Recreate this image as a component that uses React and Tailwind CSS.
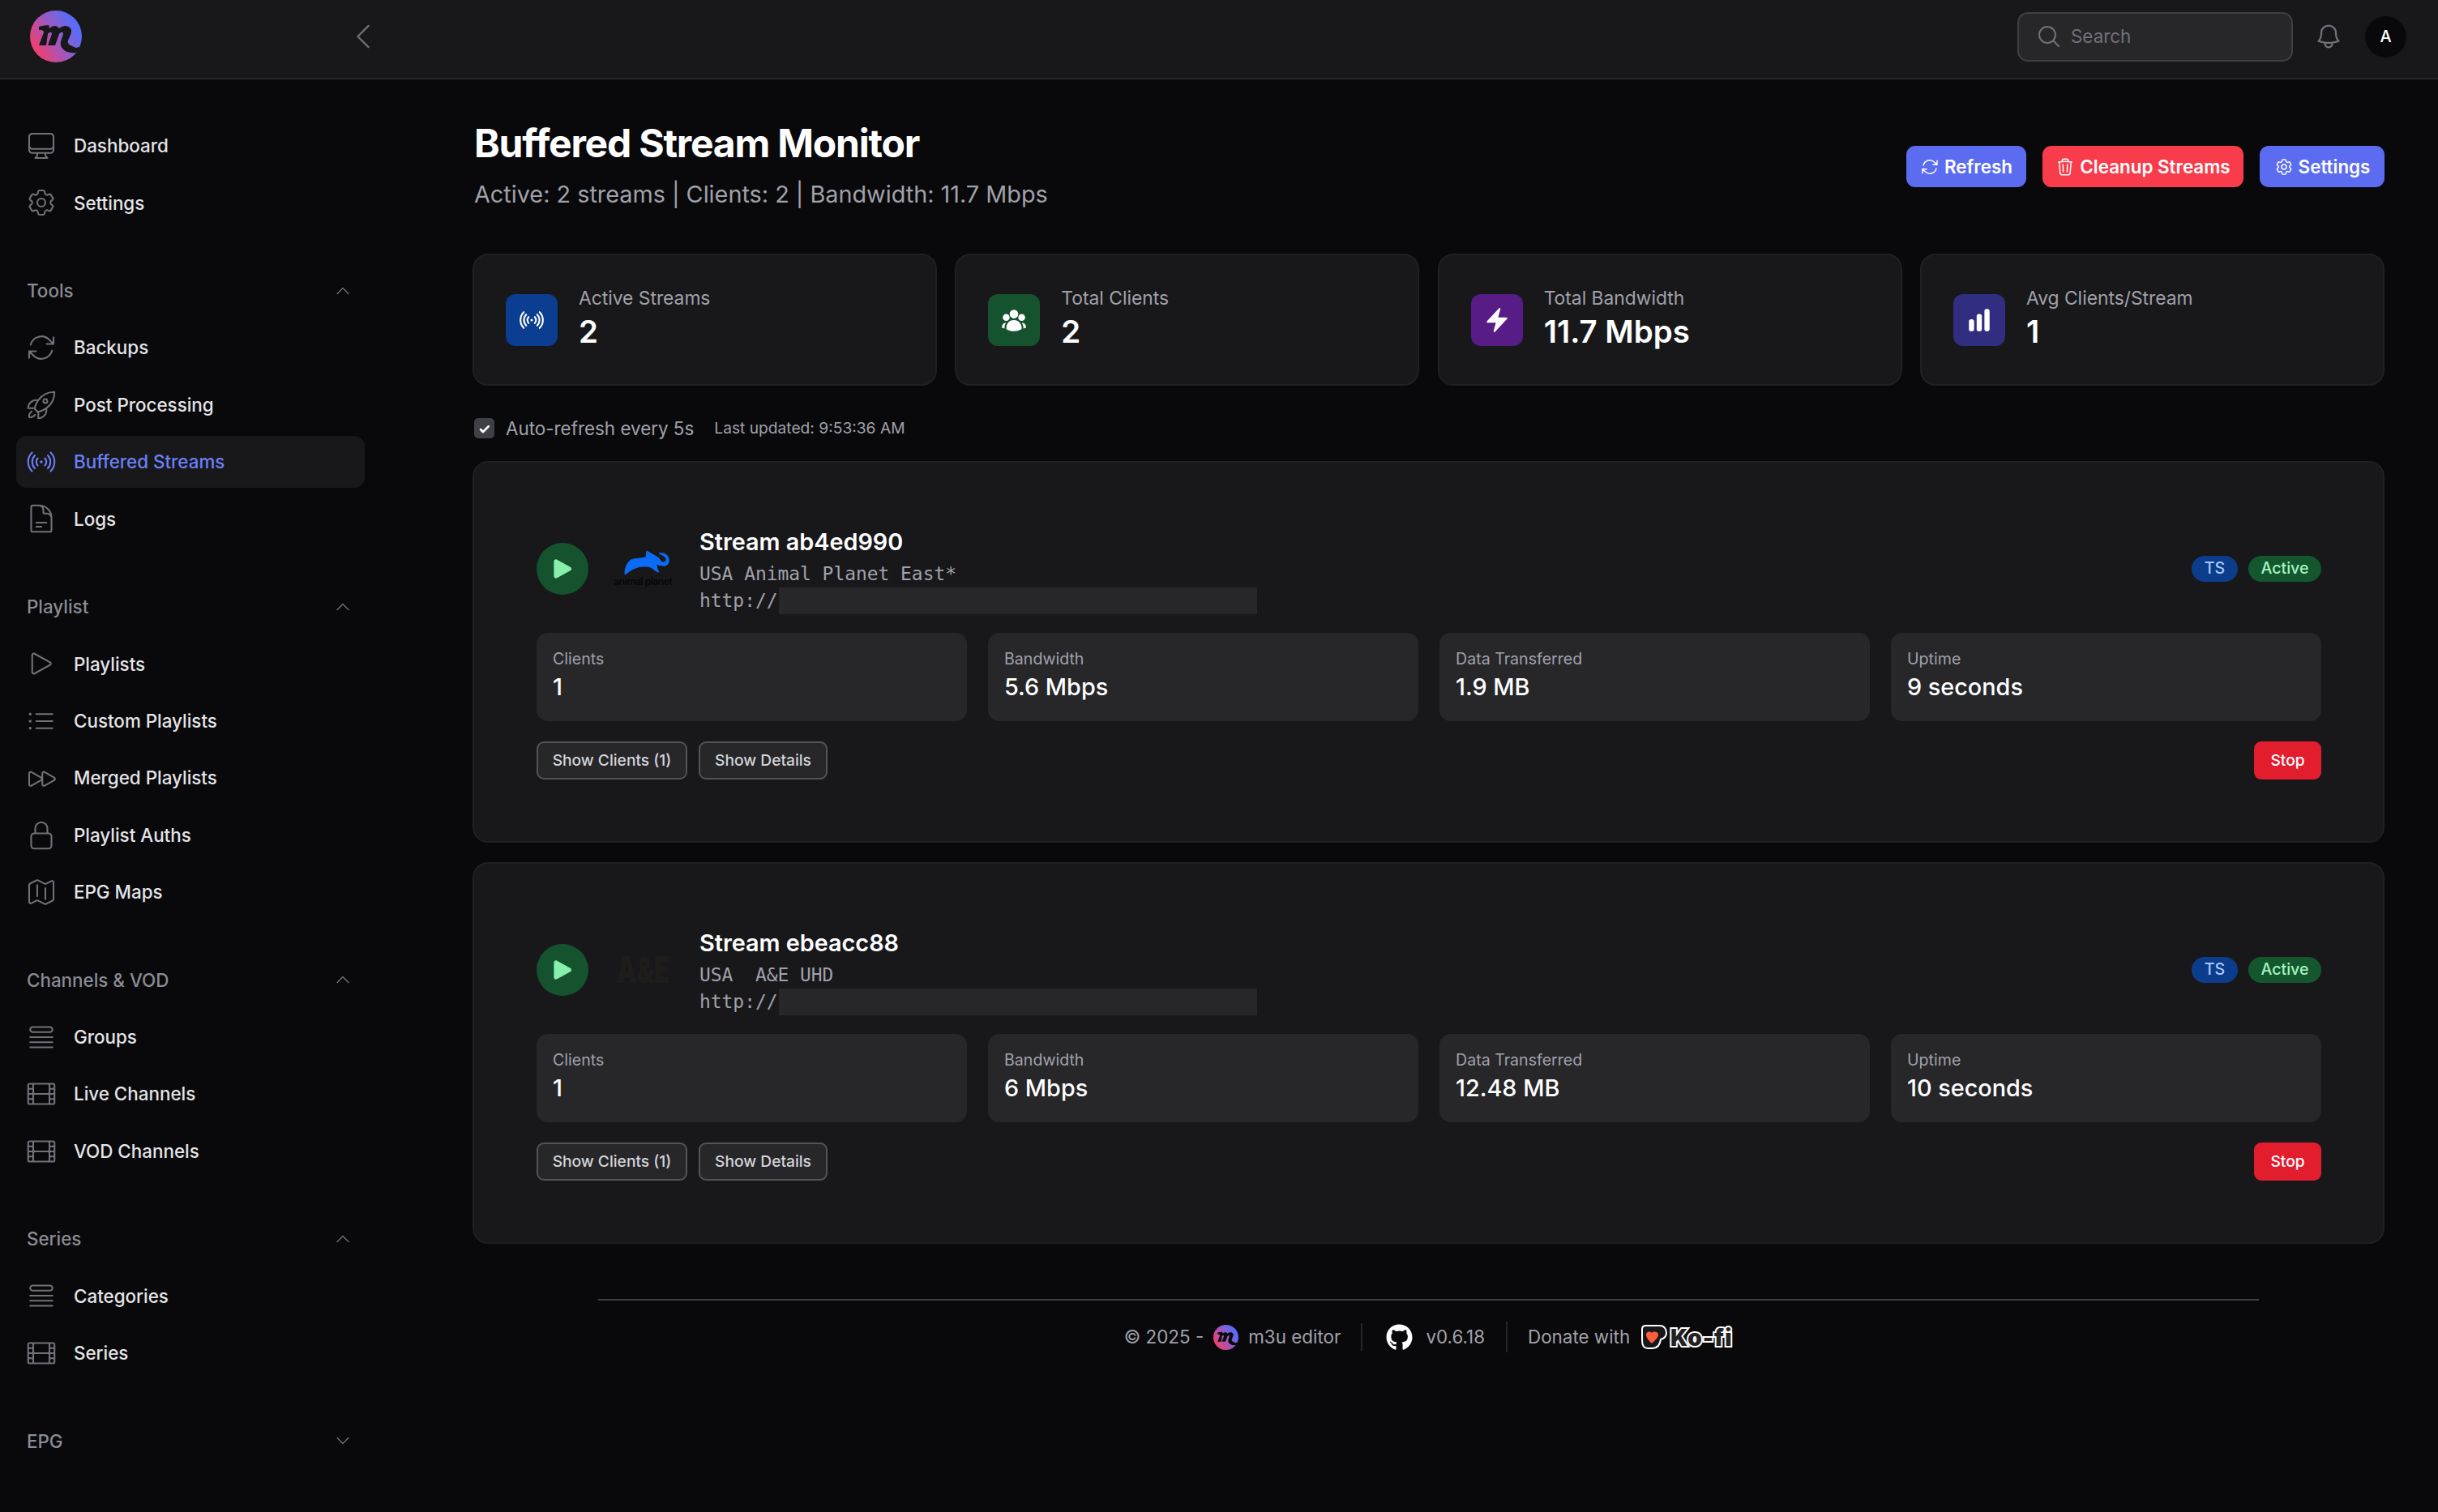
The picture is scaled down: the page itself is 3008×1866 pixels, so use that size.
import {
  HiOutlineComputerDesktop, HiOutlineCog6Tooth, HiOutlineArrowPath, HiOutlineRocketLaunch, HiOutlineSignal,
  HiOutlineDocumentText, HiOutlinePlay, HiOutlineListBullet, HiOutlineForward, HiOutlineLockClosed, HiOutlineMap,
  HiOutlineQueueList, HiOutlineFilm, HiOutlineChevronUp, HiOutlineChevronDown, HiOutlineChevronLeft,
  HiOutlineMagnifyingGlass, HiOutlineBell, HiOutlineTrash, HiUserGroup, HiBolt, HiChartBar, HiPlay,
} from 'react-icons/hi2';
import { FaGithub } from 'react-icons/fa';

const font = 'font-["Inter",sans-serif]';

const nav = [
  { items: [['Dashboard', HiOutlineComputerDesktop], ['Settings', HiOutlineCog6Tooth]] },
  { label: 'Tools', items: [['Backups', HiOutlineArrowPath], ['Post Processing', HiOutlineRocketLaunch], ['Buffered Streams', HiOutlineSignal, true], ['Logs', HiOutlineDocumentText]] },
  { label: 'Playlist', items: [['Playlists', HiOutlinePlay], ['Custom Playlists', HiOutlineListBullet], ['Merged Playlists', HiOutlineForward], ['Playlist Auths', HiOutlineLockClosed], ['EPG Maps', HiOutlineMap]] },
  { label: 'Channels & VOD', items: [['Groups', HiOutlineQueueList], ['Live Channels', HiOutlineFilm], ['VOD Channels', HiOutlineFilm]] },
  { label: 'Series', items: [['Categories', HiOutlineQueueList], ['Series', HiOutlineFilm]] },
  { label: 'EPG', collapsed: true, items: [] },
];

function Logo({ id, className, ink = '#18181b' }) {
  return (
    <svg viewBox="0 0 64 64" className={className}>
      <defs>
        <linearGradient id={id} x1="0.05" y1="0.8" x2="0.85" y2="0.3">
          <stop offset="0" stopColor="#f93c63" />
          <stop offset="0.5" stopColor="#a855b8" />
          <stop offset="1" stopColor="#5a6cf5" />
        </linearGradient>
      </defs>
      <circle cx="32" cy="32" r="32" fill={`url(#${id})`} />
      <path d="M11 20C14 19 18 18 23 18L24 22C28 18 33 18 36 22C41 18 47 18 50 22C53 26 49 32 47 37C46 40 48 42 50 43C52 44 54 45 57 46L64 44L64 50L56 52C48 53 40 50 38 43C37 38 40 33 41 29C41 26 38 26 36 29L31 43L22 43L27 29C27 26 24 26 22 29L20 43L11 43L17 27C17 24 14 24 11 24Z" fill={ink} />
    </svg>
  );
}

function KoFi() {
  return (
    <svg viewBox="0 0 116 32" className="w-[116px] h-[32px] overflow-visible">
      <path d="M3 6C3 3 5 2 8 2L25 2C30 2 33 6 33 11C33 16 30 18 26 19C25 26 22 30 16 30L10 30C5 30 3 26 3 20Z" fill="#18181b" stroke="#fff" strokeWidth="2" />
      <path d="M15 24C11 20 8 17 8 13C8 10 12 8 15 11C18 8 23 10 23 13C23 17 19 20 15 24Z" fill="#ff5e3a" />
      <text x="38" y="27" fontFamily="Inter, sans-serif" fontWeight="900" fontSize="28" fill="#222" stroke="#fff" strokeWidth="4" paintOrder="stroke" letterSpacing="1">Ko-fi</text>
    </svg>
  );
}

function Elephant() {
  return (
    <svg viewBox="0 0 76 46" className="w-[76px] h-[46px]">
      <path d="M15 30C15 24 16 20 18 17C20 13 23 11 26 11C31 10 36 10 41 9L42 1C47 4 53 7 57 10C59 13 60 15 62 15C65 15 66 13 66 11C65 8 62 6 57 4C63 3 68 5 69 11C70 17 66 20 62 19C59 19 56 18 54 17C54 21 55 24 57 27C55 27 54 26 52 25C49 22 46 20 42 20C37 20 33 20 31 21C27 22 24 24 22 25C19 27 17 29 15 30Z" fill="#0a6cf5" stroke="#0a6cf5" strokeWidth="1" />
      <text x="1" y="43" textLength="73" fontFamily="Inter, sans-serif" fontWeight="600" fontSize="12.5" fill="#060608">animal planet</text>
    </svg>
  );
}

function AeLogo() {
  return (
    <svg viewBox="0 0 76 64" className="w-[76px] h-[64px] overflow-visible">
      <text transform="translate(5 48) scale(0.67 1)" fontFamily="Inter, sans-serif" fontWeight="900" fontSize="46" fill="#1f1c1c">A&amp;E</text>
    </svg>
  );
}

function StatCard({ icon: Icon, bg, label, value }) {
  return (
    <div className="flex items-center gap-[26px] h-[163px] px-[39px] rounded-[19px] bg-[#18181b] border-2 border-[#202023]">
      <div className={`w-[64px] h-[64px] rounded-[12px] flex items-center justify-center ${bg}`}>
        <Icon className="w-[34px] h-[34px] text-white" />
      </div>
      <div className="flex flex-col -mt-[3px]">
        <span className="text-[22.8px] leading-[32px] text-[#a1a1aa]">{label}</span>
        <span className="text-[38.4px] leading-[50px] font-semibold text-white">{value}</span>
      </div>
    </div>
  );
}

function Tile({ label, value }) {
  return (
    <div className="h-[109px] rounded-[14px] bg-[#27272a] px-[20px] pt-[20px]">
      <div className="text-[19.6px] leading-[24px] text-[#a1a1aa]">{label}</div>
      <div className="mt-[2px] text-[28.8px] leading-[42px] font-medium text-white">{value}</div>
    </div>
  );
}

function StreamCard({ id, name, logo, stats }) {
  return (
    <div className="h-[471px] rounded-[19px] bg-[#18181b] border-2 border-[#202023] pl-[77px] pr-[76px] pt-[72px]">
      <div className="flex items-center h-[118px]">
        <div className="w-[64px] h-[64px] rounded-full bg-[#14532d] flex items-center justify-center">
          <HiPlay className="w-[34px] h-[34px] text-[#86efac]" />
        </div>
        <div className="w-[76px] h-[64px] ml-[30px] flex items-center justify-center">{logo}</div>
        <div className="ml-[31px] flex flex-col">
          <div className="text-[28.8px] leading-[46px] font-semibold text-white">Stream {id}</div>
          <div className='font-["DejaVu_Sans_Mono",monospace] text-[22.9px] leading-[33px] text-[#a1a1aa] whitespace-pre'>{name}</div>
          <div className='font-["DejaVu_Sans_Mono",monospace] text-[22.9px] leading-[33px] text-[#a1a1aa] flex'>
            http://<span className="ml-[2px] w-[590px] h-[33px] bg-[#27272a]" />
          </div>
        </div>
        <div className="ml-auto flex gap-[13px]">
          <span className="h-[32px] w-[57px] rounded-full bg-[#0c3d8c] text-[#a9c8f7] text-[19.6px] font-medium flex items-center justify-center">TS</span>
          <span className="h-[32px] w-[90px] rounded-full bg-[#14572f] text-[#a7f3c0] text-[19.6px] font-medium flex items-center justify-center">Active</span>
        </div>
      </div>
      <div className="grid grid-cols-4 gap-[26px] mt-[20px]">
        {stats.map(([l, v]) => <Tile key={l} label={l} value={v} />)}
      </div>
      <div className="flex items-center gap-[14px] mt-[25px]">
        <button className="h-[47px] w-[186px] rounded-[9px] bg-[#27272a] border-2 border-[#52525b] text-[19.2px] font-medium text-[#d4d4d8]">Show Clients (1)</button>
        <button className="h-[47px] w-[159px] rounded-[9px] bg-[#27272a] border-2 border-[#52525b] text-[19.2px] font-medium text-[#d4d4d8]">Show Details</button>
        <button className="ml-auto h-[47px] w-[83px] rounded-[9px] bg-[#e11d2e] text-[19.2px] font-medium text-white">Stop</button>
      </div>
    </div>
  );
}

function Sidebar() {
  return (
    <aside className="w-[470px] shrink-0 pt-[50px] pl-[20px] pr-[20px] flex flex-col gap-[44.5px]">
      {nav.map((group, i) => (
        <div key={i}>
          {group.label && (
            <div className="h-[64px] mb-[6.4px] pl-[13px] pr-[16px] flex items-center justify-between text-[22.4px] font-medium text-[#8b8b94]">
              {group.label}
              {group.collapsed
                ? <HiOutlineChevronDown className="w-[22px] h-[22px] text-[#71717a]" />
                : <HiOutlineChevronUp className="w-[22px] h-[22px] text-[#71717a]" />}
            </div>
          )}
          <div className="flex flex-col gap-[6.4px]">
            {group.items.map(([label, Icon, active]) => (
              <div key={label} className={`h-[64px] pl-[11px] rounded-[13px] flex items-center gap-[20px] ${active ? 'bg-[#18181b]' : ''}`}>
                <Icon className={`w-[40px] h-[40px] shrink-0 ${active ? 'text-[#6b80f5]' : 'text-[#71717a]'}`} strokeWidth={1.25} />
                <span className={`text-[22.4px] font-medium ${active ? 'text-[#6b80f5]' : 'text-[#e4e4e7]'}`}>{label}</span>
              </div>
            ))}
          </div>
        </div>
      ))}
    </aside>
  );
}

export default function App() {
  return (
    <div className={`${font} w-[3008px] h-[1866px] overflow-hidden bg-[#09090b] flex flex-col`}>
      <header className="h-[98px] shrink-0 bg-[#18181b] border-b-2 border-[#27272a] flex items-center pl-[37px] pr-[39px] pb-[6px]">
        <Logo id="logo-top" className="w-[64px] h-[64px]" />
        <HiOutlineChevronLeft className="ml-[326px] w-[42px] h-[42px] text-[#71717a]" strokeWidth={1.25} />
        <div className="ml-auto w-[340px] h-[61px] rounded-[13px] bg-[#27272a] border-2 border-[#3f3f46] flex items-center pl-[21px] gap-[11px]">
          <HiOutlineMagnifyingGlass className="w-[32px] h-[32px] text-[#71717a]" />
          <span className="text-[22.4px] text-[#71717a]">Search</span>
        </div>
        <HiOutlineBell className="ml-[26px] w-[36px] h-[36px] text-[#71717a]" />
        <div className="ml-[27px] w-[51px] h-[51px] rounded-full bg-[#09090b] text-white text-[20px] font-medium flex items-center justify-center">A</div>
      </header>
      <div className="flex flex-1 min-h-0">
        <Sidebar />
        <main className="flex-1 pl-[113px] pr-[66px]">
          <div className="flex items-start justify-between h-[215px]">
            <div className="pt-[47px] pl-[2px]">
              <h1 className="text-[48px] leading-[64px] font-bold tracking-tight text-white">Buffered Stream Monitor</h1>
              <p className="mt-[11px] text-[28.8px] leading-[40px] text-[#a1a1aa]">Active: 2 streams | Clients: 2 | Bandwidth: 11.7 Mbps</p>
            </div>
            <div className="flex gap-[20px] pt-[82px]">
              <button className="h-[51px] w-[148px] rounded-[11px] bg-[#5b6cf0] text-white text-[22.4px] font-semibold flex items-center justify-center gap-[6px]"><HiOutlineArrowPath className="w-[24px] h-[24px]" />Refresh</button>
              <button className="h-[51px] w-[248px] rounded-[11px] bg-[#f93c4b] text-white text-[22.4px] font-semibold flex items-center justify-center gap-[6px]"><HiOutlineTrash className="w-[24px] h-[24px]" />Cleanup Streams</button>
              <button className="h-[51px] w-[154px] rounded-[11px] bg-[#5b6cf0] text-white text-[22.4px] font-semibold flex items-center justify-center gap-[6px]"><HiOutlineCog6Tooth className="w-[24px] h-[24px]" />Settings</button>
            </div>
          </div>
          <div className="grid grid-cols-4 gap-[22.4px]">
            <StatCard icon={HiOutlineSignal} bg="bg-[#0b3d91]" label="Active Streams" value="2" />
            <StatCard icon={HiUserGroup} bg="bg-[#14532d]" label="Total Clients" value="2" />
            <StatCard icon={HiBolt} bg="bg-[#581c87]" label="Total Bandwidth" value="11.7 Mbps" />
            <StatCard icon={HiChartBar} bg="bg-[#312e81]" label="Avg Clients/Stream" value="1" />
          </div>
          <div className="flex items-center h-[93px] pt-[12px] pl-[2px]">
            <span className="w-[25px] h-[25px] rounded-[5px] bg-[#3f3f46] flex items-center justify-center">
              <svg viewBox="0 0 16 16" className="w-[22px] h-[22px] text-white" fill="currentColor"><path d="M12.2 5.2a1 1 0 0 1 0 1.4l-5 5a1 1 0 0 1-1.4 0l-2-2a1 1 0 1 1 1.4-1.4l1.3 1.3 4.3-4.3a1 1 0 0 1 1.4 0Z" /></svg>
            </span>
            <span className="ml-[14px] text-[22.4px] text-[#a1a1aa]">Auto-refresh every 5s</span>
            <span className="ml-[25px] text-[19.2px] text-[#a1a1aa]">Last updated: 9:53:36 AM</span>
          </div>
          <div className="flex flex-col gap-[24px]">
            <StreamCard id="ab4ed990" name="USA Animal Planet East*" logo={<Elephant />} stats={[['Clients', '1'], ['Bandwidth', '5.6 Mbps'], ['Data Transferred', '1.9 MB'], ['Uptime', '9 seconds']]} />
            <StreamCard id="ebeacc88" name="USA  A&E UHD" logo={<AeLogo />} stats={[['Clients', '1'], ['Bandwidth', '6 Mbps'], ['Data Transferred', '12.48 MB'], ['Uptime', '10 seconds']]} />
          </div>
          <footer className="mt-[68px] mx-[155px] border-t-2 border-[#3f3f46] pt-[26px] pl-[1px] flex items-center justify-center text-[22.4px] text-[#a1a1aa]">
            <span>© 2025 -</span>
            <Logo id="logo-foot" className="ml-[12px] w-[31px] h-[31px]" ink="#09090b" />
            <span className="ml-[12px]">m3u editor</span>
            <span className="ml-[25px] w-[2px] h-[34px] bg-[#27272a]" />
            <FaGithub className="ml-[29px] w-[33px] h-[33px] text-white" />
            <span className="ml-[16px]">v0.6.18</span>
            <span className="ml-[26px] w-[2px] h-[38px] bg-[#27272a]" />
            <span className="ml-[25px]">Donate with</span>
            <span className="ml-[12px]"><KoFi /></span>
          </footer>
        </main>
      </div>
    </div>
  );
}
